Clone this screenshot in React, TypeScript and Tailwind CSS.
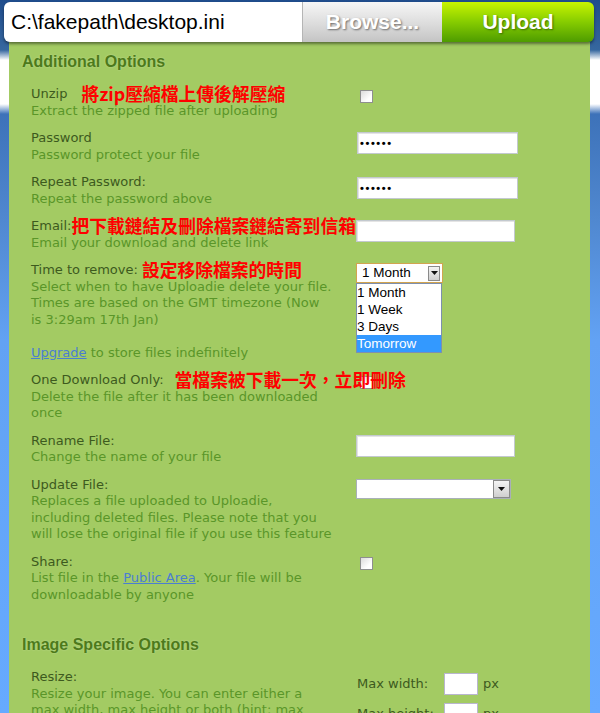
import React from 'react';

// Uploadie "Additional Options" panel with annotated (red) Chinese notes.

const LABEL = 'text-[#3d5a1e]';
const DESC = 'text-[#5a9629]';
const NOTE =
  "relative z-10 font-['Noto_Sans_CJK_TC','Noto_Sans_CJK_SC',sans-serif] font-bold text-[17.8px] leading-none text-[#ff0000]";
const HEADING =
  "font-['Liberation_Sans',Arial,sans-serif] font-bold text-[16px] leading-[20px] text-[#4d7a1b] [text-shadow:0_0_2px_rgba(255,255,255,0.35)]";

function Checkbox({ className = '' }: { className?: string }) {
  return (
    <div
      className={`h-[13px] w-[13px] border border-[#8e8f8f] bg-[linear-gradient(135deg,#dcdcdc,#ffffff_70%)] ${className}`}
    />
  );
}

function TextBox({ className = '', children }: { className?: string; children?: React.ReactNode }) {
  return (
    <div
      className={`flex h-[22px] items-center border border-[#c3c9cf] bg-white px-[2px] shadow-[inset_1px_1px_0_#e4e4e4] ${className}`}
    >
      {children}
    </div>
  );
}

function Arrow({ className = '' }: { className?: string }) {
  return (
    <div
      className={`flex items-center justify-center border border-[#8a8a8a] bg-[linear-gradient(#f4f4f4,#cfcfcf)] ${className}`}
    >
      <svg width="7" height="4" viewBox="0 0 7 4">
        <path d="M0 0h7L3.5 4z" fill="#111" />
      </svg>
    </div>
  );
}

const Dots = () => (
  <span className="font-['Liberation_Sans',Arial,sans-serif] text-[11px] font-bold tracking-[1.6px] text-black">
    ••••••
  </span>
);

type RowProps = {
  label: React.ReactNode;
  note?: string;
  noteGap?: string;
  lines: React.ReactNode[];
  control?: React.ReactNode;
  controlTop?: string;
  className?: string;
};

function Row({ label, note, noteGap = '', lines, control, controlTop = '', className = '' }: RowProps) {
  return (
    <div className={`grid grid-cols-[325px_1fr] ${className}`}>
      <div className="whitespace-nowrap">
        <div className="flex h-[16.5px] items-center">
          <span className={LABEL}>{label}</span>
          {note && <span className={`${NOTE} ${noteGap}`}>{note}</span>}
        </div>
        {lines.map((line, i) => (
          <div key={i} className={DESC}>
            {line}
          </div>
        ))}
      </div>
      <div className={controlTop}>{control}</div>
    </div>
  );
}

function TimeSelect() {
  const options = ['1 Month', '1 Week', '3 Days', 'Tomorrow'];
  return (
    <div className="relative h-[20px] w-[87px] font-['Liberation_Sans',Arial,sans-serif] text-[13.5px]">
      <div className="flex h-full items-center border border-[#d2a44f] bg-white pl-[5px] pr-[2px] text-black">
        <span className="flex-1 leading-none">1 Month</span>
        <Arrow className="h-[15px] w-[12px]" />
      </div>
      <ul className="absolute left-0 top-[20px] z-20 w-[86px] border border-[#7d8fae] bg-white leading-[17px] text-black">
        {options.map((o) => (
          <li key={o} className={o === 'Tomorrow' ? 'bg-[#3399ff] text-white' : ''}>
            {o}
          </li>
        ))}
      </ul>
    </div>
  );
}

function Link({ children }: { children: React.ReactNode }) {
  return <span className="text-[#4a7ed2] underline">{children}</span>;
}

export default function App() {
  return (
    <div className="h-[713px] overflow-hidden bg-[linear-gradient(#1f4c8c_0px,#36679f_50px,#ffffff_60px,#ffffff_104px,#3d72b9_114px,#5088d0_220px,#62a2f4_340px,#66aaff_713px)] pt-[2px]">
      {/* upload bar */}
      <div className="relative z-10 ml-[4px] flex h-[40px] w-[590px] shadow-[0_2px_3px_rgba(0,0,0,0.45)] rounded-[6px] font-['Liberation_Sans',Arial,sans-serif]">
        <div className="flex w-[298px] items-center rounded-l-[6px] bg-white pl-[7px] text-[21px] text-black">
          C:\fakepath\desktop.ini
        </div>
        <div className="flex w-[140px] items-center justify-center border-l border-[#b5b5b5] bg-[linear-gradient(#f6f6f6,#dcdcdc_55%,#c4c4c4)] text-[21px] font-bold text-white [text-shadow:1px_1px_2px_#6b6b6b]">
          Browse...
        </div>
        <div className="flex w-[152px] items-center justify-center rounded-r-[6px] bg-[linear-gradient(#c8f400,#86cc00_50%,#4e9c00)] text-[21px] font-bold text-white [text-shadow:1px_1px_2px_#3b6e00]">
          Upload
        </div>
      </div>

      {/* options panel */}
      <div className="ml-[9px] h-[700px] w-[581px] bg-[#a3cb63] pl-[13px] pt-[10px]">
        <h2 className={HEADING}>Additional Options</h2>

        <div className="mt-[14px] flex flex-col gap-[11px] pl-[9px] font-['DejaVu_Sans',Verdana,sans-serif] text-[13px] leading-[16.5px]">
          <Row
            label="Unzip"
            note="將zip壓縮檔上傳後解壓縮"
            noteGap="ml-[14px]"
            lines={['Extract the zipped file after uploading']}
            controlTop="pt-[4px]"
            control={<Checkbox className="ml-[4px]" />}
          />
          <Row
            label="Password"
            lines={['Password protect your file']}
            controlTop="pt-[2px]"
            control={
              <TextBox className="ml-[1px] w-[161px]">
                <Dots />
              </TextBox>
            }
          />
          <Row
            label="Repeat Password:"
            lines={['Repeat the password above']}
            controlTop="pt-[3px]"
            control={
              <TextBox className="ml-[1px] w-[161px]">
                <Dots />
              </TextBox>
            }
          />
          <Row
            label="Email:"
            note="把下載鏈結及刪除檔案鏈結寄到信箱"
            lines={['Email your download and delete link']}
            controlTop="pt-[2px]"
            control={<TextBox className="w-[159px]" />}
          />
          <Row
            label="Time to remove:"
            note="設定移除檔案的時間"
            noteGap="ml-[4px]"
            lines={[
              'Select when to have Uploadie delete your file.',
              'Times are based on the GMT timezone (Now',
              'is 3:29am 17th Jan)',
            ]}
            controlTop="pt-[1px]"
            control={<TimeSelect />}
          />
          <div className={`mt-[5.5px] ${DESC}`}>
            <Link>Upgrade</Link> to store files indefinitely
          </div>
          <Row
            label="One Download Only:"
            note="當檔案被下載一次，立即刪除"
            noteGap="ml-[11px]"
            lines={['Delete the file after it has been downloaded', 'once']}
            controlTop="pt-[4px]"
            control={<Checkbox className="ml-[4px]" />}
          />
          <Row
            label="Rename File:"
            lines={['Change the name of your file']}
            controlTop="pt-[2.5px]"
            control={<TextBox className="w-[159px]" />}
          />
          <Row
            label="Update File:"
            lines={[
              'Replaces a file uploaded to Uploadie,',
              'including deleted files. Please note that you',
              'will lose the original file if you use this feature',
            ]}
            controlTop="pt-[2.5px]"
            control={
              <div className="flex h-[20px] w-[155px] border border-[#a9b0b8] bg-white">
                <div className="flex-1" />
                <Arrow className="h-[18px] w-[17px]" />
              </div>
            }
          />
          <Row
            label="Share:"
            lines={[
              <>
                List file in the <Link>Public Area</Link>. Your file will be
              </>,
              'downloadable by anyone',
            ]}
            controlTop="pt-[3.5px]"
            control={<Checkbox className="ml-[4px]" />}
          />
        </div>

        <h2 className={`mt-[32px] ${HEADING}`}>Image Specific Options</h2>

        <div className="mt-[14px] pl-[9px] font-['DejaVu_Sans',Verdana,sans-serif] text-[13px] leading-[16.5px]">
          <Row
            label="Resize:"
            lines={['Resize your image. You can enter either a', 'max width, max height or both (hint: max']}
            controlTop="pt-[4px]"
            control={
              <div className="flex flex-col gap-[8px] pl-[1px]">
                {['Max width:', 'Max height:'].map((l) => (
                  <div key={l} className="flex items-center">
                    <span className={`w-[87px] ${LABEL}`}>{l}</span>
                    <div className="h-[22px] w-[34px] border border-[#b9b6cf] bg-white" />
                    <span className={`ml-[5px] ${LABEL}`}>px</span>
                  </div>
                ))}
              </div>
            }
          />
        </div>
      </div>
    </div>
  );
}
